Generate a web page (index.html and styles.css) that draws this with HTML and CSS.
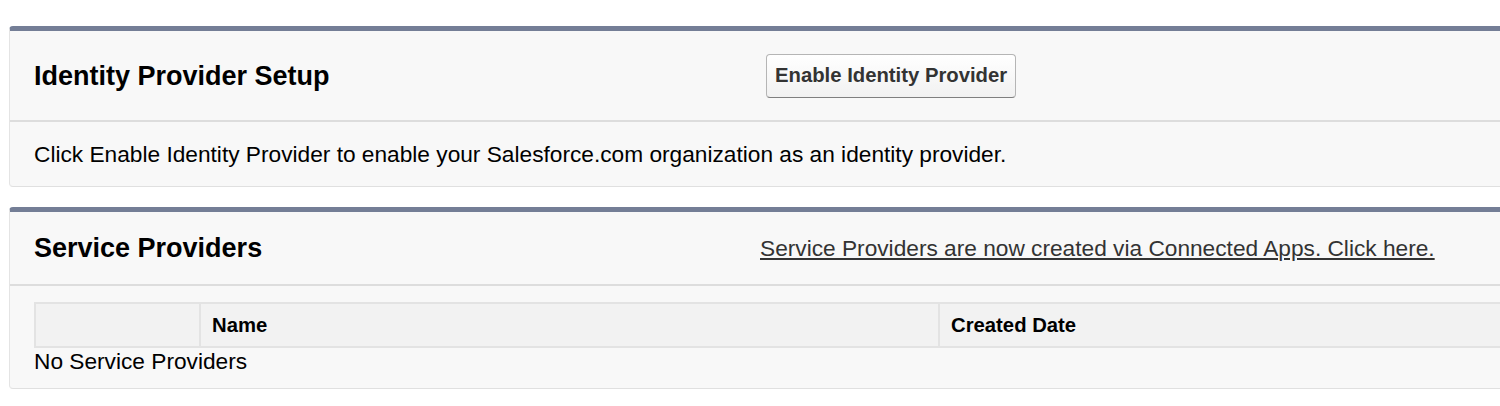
FILE: index.html
```html
<!DOCTYPE html>
<html>
<head>
<meta charset="utf-8">
<link rel="stylesheet" href="styles.css">
</head>
<body>
<div class="page">
  <section class="panel">
    <div class="panel-header">
      <h2 class="panel-title">Identity Provider Setup</h2>
      <div class="panel-actions"><button class="btn">Enable Identity Provider</button></div>
    </div>
    <div class="panel-body">
      <p class="desc">Click Enable Identity Provider to enable your Salesforce.com organization as an identity provider.</p>
    </div>
  </section>
  <section class="panel panel-sp">
    <div class="panel-header header-sp">
      <h2 class="panel-title">Service Providers</h2>
      <div class="panel-actions actions-sp"><a class="link" href="#">Service Providers are now created via Connected Apps. Click here.</a></div>
    </div>
    <div class="panel-body body-sp">
      <div class="list">
        <div class="list-head">
          <div class="cell cell-action"></div>
          <div class="cell cell-name">Name</div>
          <div class="cell cell-date">Created Date</div>
        </div>
        <div class="empty">No Service Providers</div>
      </div>
    </div>
  </section>
</div>
</body>
</html>
```

FILE: styles.css
```css
html, body {
  margin: 0;
  padding: 0;
  overflow: hidden;
  background: #ffffff;
}
body {
  font-family: "Liberation Sans", Arial, sans-serif;
  color: #000;
}
.page {
  padding: 26px 0 0 9px;
  width: 1540px;
}
.panel {
  background: #f8f8f8;
  border-top: 5px solid #747e96;
  border-left: 1px solid #e4e4e4;
  border-bottom: 1px solid #e0e0e0;
  border-radius: 4px 0 0 4px;
  margin-bottom: 20px;
}
.panel-header {
  display: grid;
  grid-template-columns: 732px 1fr;
  align-items: center;
  height: 89px;
  padding-left: 24px;
  border-bottom: 2px solid #dddddd;
}
.panel-title {
  margin: 0;
  font-size: 27px;
  font-weight: bold;
  line-height: 30px;
}
.btn {
  font-family: "Liberation Sans", Arial, sans-serif;
  font-size: 20.3px;
  font-weight: bold;
  color: #333;
  height: 44px;
  padding: 0 8px;
  border: 1px solid #b5b5b5;
  border-bottom-color: #7f7f7f;
  border-radius: 4px;
  background: linear-gradient(#ffffff, #f1f1f1);
}
.panel-body {
  height: 64px;
  display: flex;
  align-items: center;
  padding-left: 24px;
}
.desc {
  margin: 0;
  font-size: 22.7px;
  line-height: 26px;
}
.header-sp {
  height: 72px;
  grid-template-columns: 726px 1fr;
}
.link {
  color: #333;
  font-size: 22.7px;
  line-height: 26px;
  text-decoration: underline;
}
.body-sp {
  display: block;
  height: auto;
  padding: 16px 0 14px 24px;
}
.list-head {
  display: grid;
  grid-template-columns: 165px 739px 1fr;
  box-sizing: border-box;
  height: 46px;
  background: #f2f2f2;
  border-top: 2px solid #e3e3e3;
  border-bottom: 2px solid #e3e3e3;
  border-left: 2px solid #e3e3e3;
}
.cell {
  display: flex;
  align-items: center;
  padding-left: 11px;
  font-size: 20.3px;
  font-weight: bold;
  border-right: 2px solid #e3e3e3;
}
.cell-date {
  border-right: none;
}
.empty {
  font-size: 22.7px;
  line-height: 26px;
}
```
